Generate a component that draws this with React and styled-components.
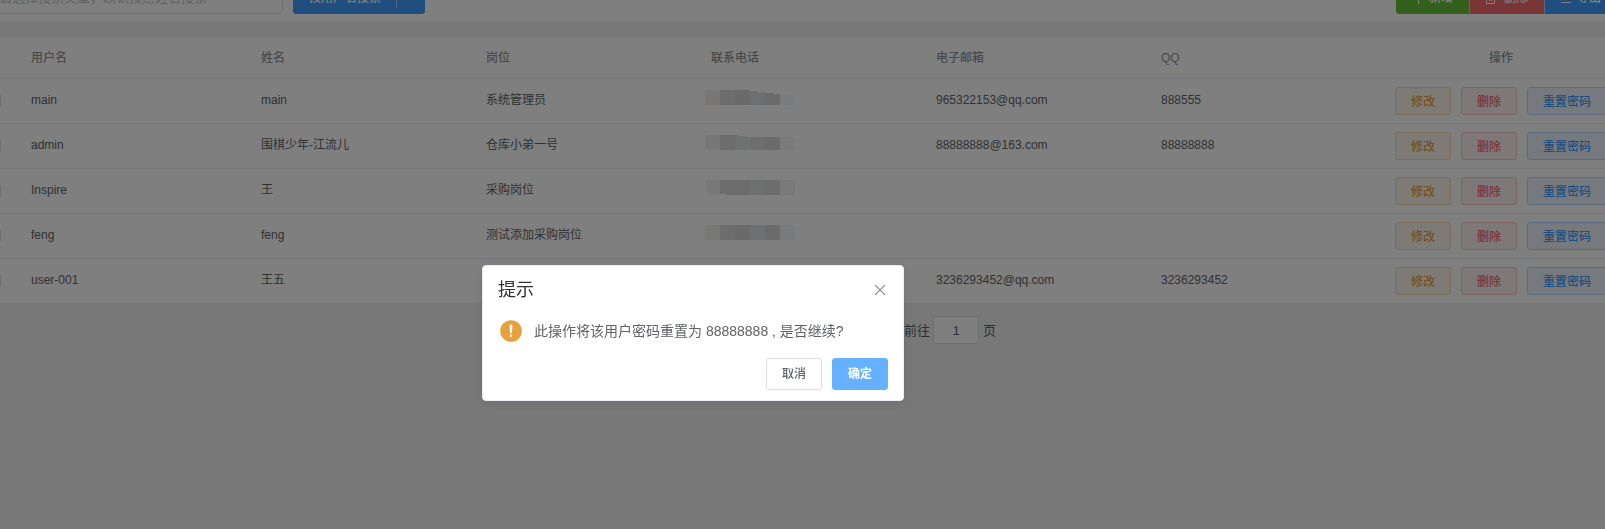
import React from 'react';
import styled, { createGlobalStyle, css } from 'styled-components';

const GlobalStyle = createGlobalStyle`
  *, *::before, *::after { box-sizing: border-box; }
  body {
    margin: 0;
    overflow: hidden;
    background: #f0f0f0;
    color: #606266;
    font-family: "Liberation Sans", "Noto Sans CJK SC", sans-serif;
    font-size: 12px;
  }
  button, input { font-family: inherit; margin: 0; }
`;

const Page = styled.main`
  width: 100vw;
  height: 100vh;
  overflow: hidden;
`;

const Toolbar = styled.header`
  display: flex;
  align-items: flex-end;
  height: 22px;
  padding-bottom: 8px;
  overflow: hidden;
  background: #fff;
`;

const SearchInput = styled.input`
  flex: none;
  width: 300px;
  height: 32px;
  margin: 0 10px 0 -17px;
  padding: 0 15px 1px;
  border: 1px solid #dcdfe6;
  border-radius: 4px;
  background: #fff;
  font-size: 13px;
  &::placeholder { color: #c0c4cc; opacity: 1; }
`;

const SplitButton = styled.div`
  display: flex;
  flex: none;
  width: 132px;
  height: 32px;
  border-radius: 3px;
  background: #409eff;
  color: #fff;
`;

const SplitLabel = styled.button`
  width: 103px;
  padding: 0 0 1px 1px;
  border: 0;
  background: none;
  color: inherit;
  font-size: 12px;
  font-weight: 500;
  line-height: 1;
`;

const SplitToggle = styled.span`
  width: 1px;
  margin: 5px 0 6px;
  background: rgba(255, 255, 255, 0.5);
`;

const ActionGroup = styled.div`
  display: flex;
  flex: none;
  margin-left: auto;
  margin-right: -13px;
`;

const tones = {
  success: '#67c23a',
  danger: '#f56c6c',
  primary: '#409eff',
};

const ActionButton = styled.button`
  display: flex;
  align-items: center;
  gap: ${(p) => p.$gap || 5}px;
  width: ${(p) => p.$width}px;
  height: 32px;
  padding: 0 0 1px 16px;
  border: 0;
  border-radius: ${(p) => (p.$first ? '3px 0 0 3px' : '0')};
  box-shadow: ${(p) => (p.$first ? 'none' : 'inset 1px 0 rgba(255, 255, 255, 0.5)')};
  background: ${(p) => tones[p.$tone]};
  color: #fff;
  font-size: 12px;
  font-weight: 500;
  line-height: 1;
  white-space: nowrap;
`;

const Table = styled.section`
  margin-top: 16px;
  overflow: hidden;
  background: #fff;
`;

const Row = styled.div`
  display: grid;
  grid-template-columns: 21px 230px repeat(5, 225px) 250px;
  width: 1626px;
  height: ${(p) => (p.$head ? 41 : 45)}px;
  border-bottom: 1px solid #ebeef5;
  ${(p) =>
    p.$head &&
    css`
      color: #909399;
      font-weight: 500;
    `}
`;

const Cell = styled.div`
  display: flex;
  align-items: center;
  justify-content: ${(p) => (p.$center ? 'center' : 'flex-start')};
  gap: 10px;
  min-width: 0;
  padding: 0 10px ${(p) => (p.$text ? '2px' : '0')};
  line-height: 14px;
  white-space: nowrap;
`;

const HeadCell = styled(Cell)`
  padding-bottom: 1px;
`;

const CheckCell = styled.div`
  display: flex;
  align-items: center;
`;

const Checkbox = styled.span`
  width: 14px;
  height: 14px;
  margin-left: -13px;
  border: 1px solid #dcdfe6;
  border-radius: 2px;
`;

const MaskCell = styled.div`
  padding: 11px 0 0 4px;
`;

const plain = {
  warning: ['#fdf6ec', '#f5dab1', '#e6a23c'],
  danger: ['#fef0f0', '#fbc4c4', '#f56c6c'],
  primary: ['#ecf5ff', '#b3d8ff', '#409eff'],
};

const RowButton = styled.button`
  height: 28px;
  padding: 2px 15px 0;
  border: 1px solid ${(p) => plain[p.$tone][1]};
  border-radius: 3px;
  background: ${(p) => plain[p.$tone][0]};
  color: ${(p) => plain[p.$tone][2]};
  font-size: 12px;
  font-weight: 500;
  line-height: 1;
`;

const Pagination = styled.nav`
  display: flex;
  align-items: center;
  padding: 12px 0 0 904px;
  font-size: 13px;
  line-height: 15px;
`;

const PageInput = styled.input`
  width: 46px;
  height: 28px;
  margin: 0 4px 0 3px;
  padding: 0;
  border: 1px solid #dcdfe6;
  border-radius: 3px;
  background: #fff;
  color: #606266;
  font-size: 13px;
  text-align: center;
`;

const Overlay = styled.div`
  position: fixed;
  inset: 0;
  display: flex;
  align-items: flex-start;
  padding: 265px 0 0 482px;
  background: rgba(0, 0, 0, 0.5);
`;

const Dialog = styled.div`
  width: 422px;
  height: 136px;
  border: 1px solid #ebeef5;
  border-radius: 4px;
  background: #fff;
  box-shadow: 0 2px 12px rgba(0, 0, 0, 0.1);
`;

const DialogHeader = styled.div`
  display: flex;
  align-items: center;
  justify-content: space-between;
  height: 46px;
  padding: 1px 17px 0 15px;
  color: #303133;
  font-size: 18px;
  line-height: 18px;
`;

const DialogBody = styled.div`
  display: flex;
  align-items: center;
  gap: 12px;
  height: 38px;
  padding-left: 17px;
  color: #606266;
  font-size: 14px;
  line-height: 16px;
  white-space: nowrap;
`;

const DialogFooter = styled.div`
  display: flex;
  justify-content: flex-end;
  gap: 10px;
  padding: 8px 15px 0;
`;

const DialogButton = styled.button`
  width: 56px;
  height: 32px;
  padding: 0;
  border: 1px solid ${(p) => (p.$primary ? '#66b1ff' : '#dcdfe6')};
  border-radius: 3px;
  background: ${(p) => (p.$primary ? '#66b1ff' : '#fff')};
  color: ${(p) => (p.$primary ? '#fff' : '#606266')};
  font-size: 12px;
  font-weight: ${(p) => (p.$primary ? 700 : 500)};
  line-height: 1;
`;

const PlusIcon = () => (
  <svg width="12" height="12" viewBox="0 0 12 12" stroke="#fff" fill="none">
    <path d="M6.5 1v11M1 6.5h11" />
  </svg>
);

const TrashIcon = () => (
  <svg width="12" height="12" viewBox="0 0 12 12" stroke="#fff" fill="none">
    <path d="M0 2.5h11M3.5 2.5v-2h4v2M1.5 2.5v9h8v-9M4.5 5v4M6.5 5v4" />
  </svg>
);

const ExportIcon = () => (
  <svg width="12" height="12" viewBox="0 0 12 12" stroke="#fff" fill="none">
    <path d="M1 10.5h10M6 1v6M3.5 4.5L6 7l2.5-2.5" />
  </svg>
);

const CloseIcon = () => (
  <svg width="12" height="12" viewBox="0 0 12 12" stroke="#909399" fill="none">
    <path d="M1 1l10 10M11 1L1 11" strokeWidth="1.1" />
  </svg>
);

const WarningIcon = () => (
  <svg width="22" height="22" viewBox="0 0 22 22">
    <circle cx="11" cy="11" r="10.8" fill="#e6a23c" />
    <path d="M9.6 6a1.4 1.4 0 012.8 0l-.5 6.4a.9.9 0 01-1.8 0z" fill="#fff" />
    <circle cx="11" cy="15.7" r="1.2" fill="#fff" />
  </svg>
);

const maskColors = [
  ['#f1efea', '#dadada', '#d5d5d5', '#dadee2', '#d6d6d6', '#f3f6fa'],
  ['#efefef', '#dadada', '#e0e3e3', '#dadddc', '#d6d6d6', '#f3f5f8'],
  ['#f1f1f1', '#d8d8d8', '#d8d8d8', '#dce1df', '#dadada', '#f2f2f2'],
  ['#f1f1ef', '#dadada', '#d5d5d5', '#dce0e2', '#d6d6d6', '#f3f4f6'],
];
const maskShapes = [
  'M0 0H44V1H52V2H60V3H68V4H75V5H84V6H90V15H0Z',
  'M2 0H34V1H42V2H88L90 4V15H2L0 13V2Z',
  'M0 0H90V15H21V14H5L0 11Z',
  'M0 0H88L90 2V15H0Z',
];

const Mask = ({ index }) => (
  <svg width="90" height="15" viewBox="0 0 90 15" shapeRendering="crispEdges" display="block">
    <clipPath id={`mask-${index}`}>
      <path d={maskShapes[index]} />
    </clipPath>
    <g clipPath={`url(#mask-${index})`}>
      {maskColors[index].map((fill, i) => (
        <rect key={i} x={i * 15} width="15" height="15" fill={fill} />
      ))}
    </g>
  </svg>
);

const users = [
  ['main', 'main', '系统管理员', '965322153@qq.com', '888555'],
  ['admin', '围棋少年-江流儿', '仓库小弟一号', '88888888@163.com', '88888888'],
  ['Inspire', '王', '采购岗位', '', ''],
  ['feng', 'feng', '测试添加采购岗位', '', ''],
  ['user-001', '王五', '', '3236293452@qq.com', '3236293452'],
];

export default function App() {
  return (
    <Page>
      <GlobalStyle />
      <Toolbar>
        <SearchInput placeholder="请选择搜索类型，默认按照姓名搜索" />
        <SplitButton>
          <SplitLabel>按用户名搜索</SplitLabel>
          <SplitToggle />
        </SplitButton>
        <ActionGroup>
          <ActionButton $tone="success" $width={73} $first><PlusIcon />新增</ActionButton>
          <ActionButton $tone="danger" $width={75} $gap={7}><TrashIcon />删除</ActionButton>
          <ActionButton $tone="primary" $width={74}><ExportIcon />导出</ActionButton>
        </ActionGroup>
      </Toolbar>
      <Table>
        <Row $head>
          <CheckCell />
          {['用户名', '姓名', '岗位', '联系电话', '电子邮箱', 'QQ'].map((t) => (
            <HeadCell key={t}>{t}</HeadCell>
          ))}
          <HeadCell $center>操作</HeadCell>
        </Row>
        {users.map(([login, name, post, mail, qq], i) => (
          <Row key={login}>
            <CheckCell><Checkbox /></CheckCell>
            <Cell $text>{login}</Cell>
            <Cell $text>{name}</Cell>
            <Cell $text>{post}</Cell>
            <MaskCell>{i < 4 && <Mask index={i} />}</MaskCell>
            <Cell $text>{mail}</Cell>
            <Cell $text>{qq}</Cell>
            <Cell $center>
              <RowButton $tone="warning">修改</RowButton>
              <RowButton $tone="danger">删除</RowButton>
              <RowButton $tone="primary">重置密码</RowButton>
            </Cell>
          </Row>
        ))}
      </Table>
      <Pagination>
        前往
        <PageInput defaultValue="1" />
        页
      </Pagination>
      <Overlay>
        <Dialog>
          <DialogHeader>提示<CloseIcon /></DialogHeader>
          <DialogBody><WarningIcon />此操作将该用户密码重置为 88888888 , 是否继续?</DialogBody>
          <DialogFooter>
            <DialogButton>取消</DialogButton>
            <DialogButton $primary>确定</DialogButton>
          </DialogFooter>
        </Dialog>
      </Overlay>
    </Page>
  );
}
